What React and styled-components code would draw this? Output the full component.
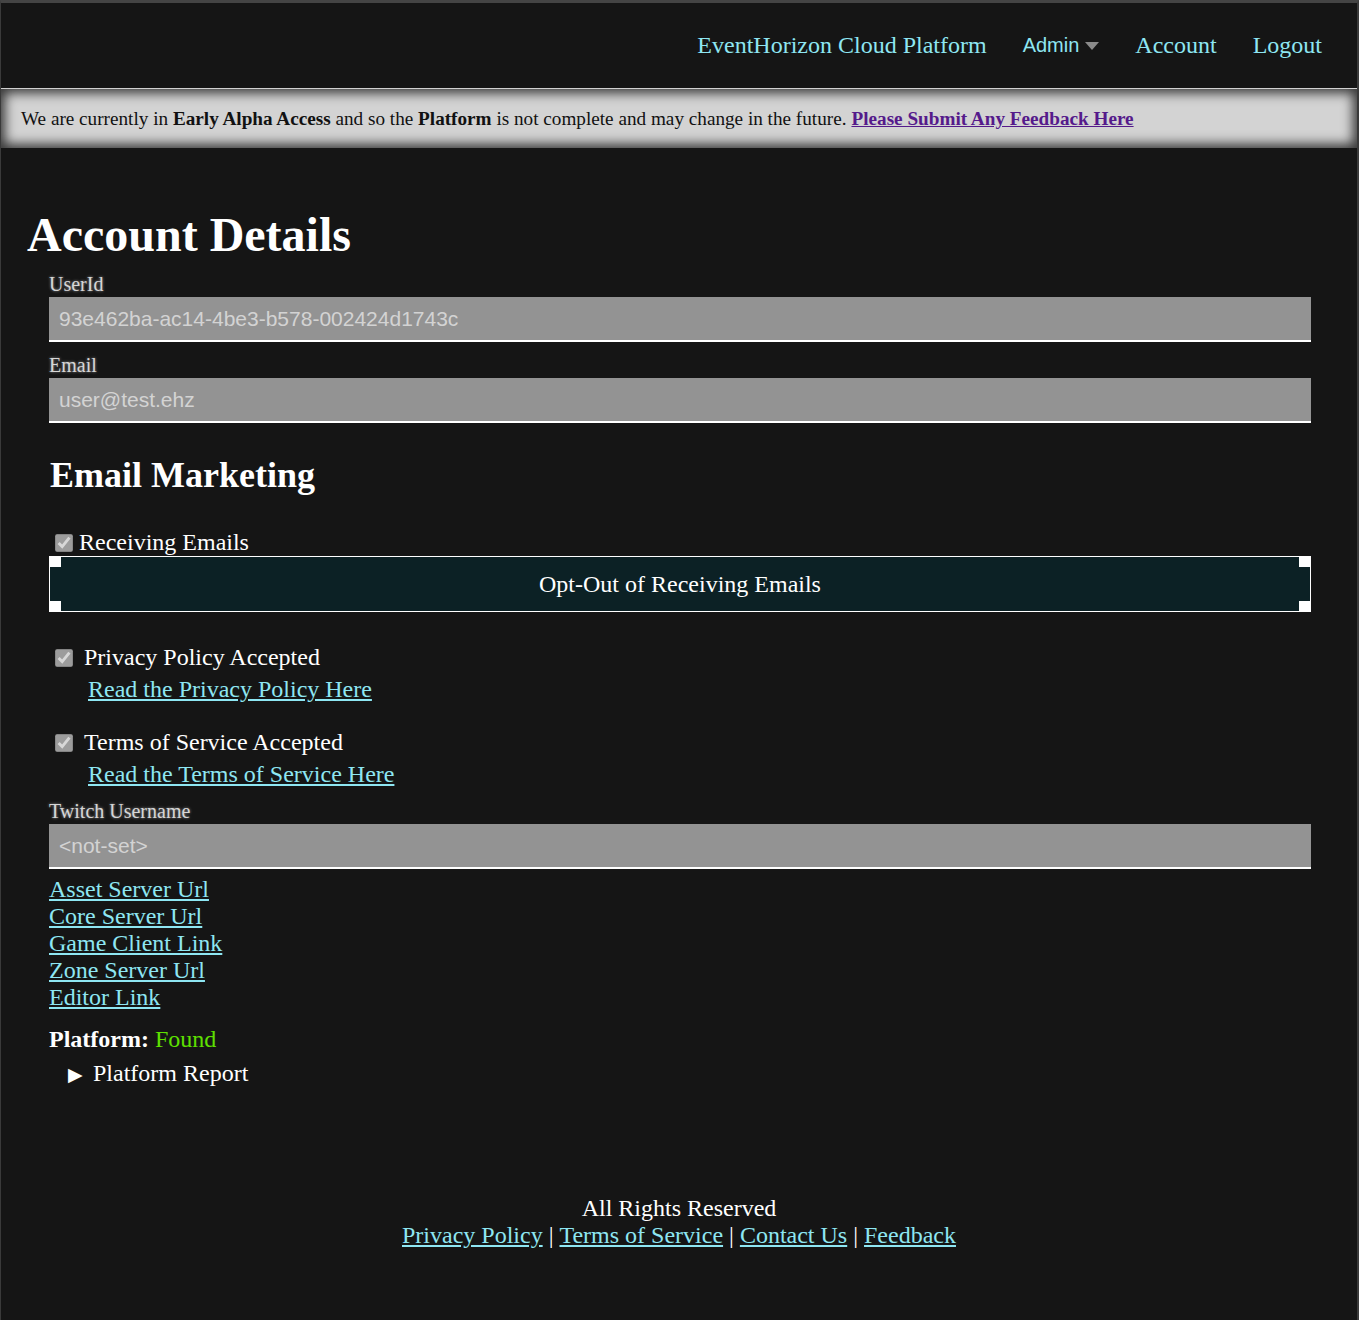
import styled, {createGlobalStyle} from "styled-components";

const GlobalStyle = createGlobalStyle`
    html, body {
        margin: 0;
        padding: 0;
        background: #151515;
    }
    body {
        font-family: "Liberation Serif", "Times New Roman", serif;
        font-size: 24px;
        color: #ffffff;
    }
`

const Page = styled.div`
    display: flex;
    flex-direction: column;
    min-height: 1317px;
    border-top: 3px solid #444444;
    border-left: 1px solid #3a3a3a;
    border-right: 2px solid #3a3a3a;
    background: #151515;
`

const Header = styled.header`
    display: flex;
    justify-content: flex-end;
    align-items: center;
    gap: 36px;
    height: 85px;
    padding-right: 35px;
    border-bottom: 1px solid #d0d0d0;
`

const NavLink = styled.a`
    color: #8ee6f2;
    text-decoration: none;
    font-size: 24px;
`

const AdminMenu = styled.span`
    display: flex;
    align-items: center;
    gap: 6px;
    color: #8ee6f2;
    font-family: "Liberation Sans", Arial, sans-serif;
    font-size: 20px;
`

const Caret = styled.span`
    width: 0;
    height: 0;
    border-left: 7px solid transparent;
    border-right: 7px solid transparent;
    border-top: 8px solid #8a8a8a;
    margin-top: 1px;
`

const Banner = styled.div`
    height: 59px;
    display: flex;
    align-items: center;
    padding-left: 20px;
    background: #d3d3d3;
    box-shadow: inset 0 0 12px 4px rgba(0, 0, 0, 0.75);
    color: #111111;
    font-size: 19.2px;

    b {
        font-weight: 700;
    }
`

const BannerLink = styled.a`
    margin-left: 5px;
    color: #551a8b;
    font-weight: 700;
    text-decoration: underline;
`

const Main = styled.main`
    flex: 1;
    padding: 60px 25px 0;
`

const Title = styled.h1`
    margin: 0 0 12px 1px;
    font-size: 48px;
    font-weight: 700;
    line-height: 53px;
`

const Section = styled.section`
    display: flex;
    flex-direction: column;
    margin: 0 21px 0 23px;
`

const Label = styled.label`
    display: block;
    font-size: 20px;
    line-height: 22px;
    color: #d6d6d6;
    text-shadow: 0 0 3px rgba(255, 255, 255, 0.55);
    margin-bottom: 2px;
`

const Field = styled.input`
    box-sizing: border-box;
    width: 100%;
    height: 45px;
    margin: 0 0 ${p => p.$gap || 12}px;
    padding: 0 10px;
    border: none;
    border-bottom: 2px solid #ffffff;
    background: #939393;
    color: #d3d3d3;
    font-family: "Liberation Sans", Arial, sans-serif;
    font-size: 21px;
    outline: none;
`

const SubTitle = styled.h2`
    margin: 20px 0 34px 1px;
    font-size: 36px;
    font-weight: 700;
    line-height: 40px;
`

const CheckRow = styled.div`
    display: flex;
    align-items: center;
    gap: ${p => p.$gap || 6}px;
    padding-left: 6px;
    line-height: 27px;
`

const Check = styled.input`
    width: 18px;
    height: 18px;
    margin: 0;
`

const OptOutButton = styled.button`
    position: relative;
    box-sizing: border-box;
    width: 100%;
    height: 56px;
    margin: 0 0 32px;
    border: 1px solid #ffffff;
    background: #0c2125;
    color: #ffffff;
    font-family: "Liberation Serif", "Times New Roman", serif;
    font-size: 24px;
    cursor: pointer;
`

const Corner = styled.span`
    position: absolute;
    width: 12px;
    height: 11px;
    background: #ffffff;
    ${p => p.$top ? "top: -1px;" : "bottom: -1px;"}
    ${p => p.$left ? "left: -1px;" : "right: -1px;"}
`

const PolicyBlock = styled.div`
    display: flex;
    flex-direction: column;
    margin-bottom: ${p => p.$gap || 0}px;
`

const IndentLink = styled.a`
    margin: 5px 0 0 39px;
    color: #8ee6f2;
    text-decoration: underline;
    line-height: 27px;
`

const LinkList = styled.div`
    display: flex;
    flex-direction: column;
    align-items: flex-start;
    line-height: 27px;
`

const Link = styled.a`
    color: #8ee6f2;
    text-decoration: underline;
`

const Status = styled.div`
    margin-top: 15px;
    line-height: 27px;

    b {
        font-weight: 700;
    }
`

const Found = styled.span`
    color: #5ee000;
`

const Report = styled.details`
    margin: 7px 0 0 19px;
    line-height: 27px;

    summary {
        cursor: pointer;
        list-style: none;
    }
    summary::before {
        content: "▶";
        display: inline-block;
        width: 25px;
        font-size: 19px;
    }
`

const Footer = styled.footer`
    display: flex;
    flex-direction: column;
    align-items: center;
    padding: 0 0 71px;
    line-height: 27px;
`

const FooterLinks = styled.div`
    display: flex;
    gap: 6px;
    color: #ffffff;
`

export default function App() {
    return (
        <Page>
            <GlobalStyle />
            <Header>
                <NavLink href="#">EventHorizon Cloud Platform</NavLink>
                <AdminMenu>Admin <Caret /></AdminMenu>
                <NavLink href="#">Account</NavLink>
                <NavLink href="#">Logout</NavLink>
            </Header>
            <Banner>
                <span>
                    We are currently in <b>Early Alpha Access</b> and so the <b>Platform</b> is not complete and may change in the future.
                </span>
                <BannerLink href="#">Please Submit Any Feedback Here</BannerLink>
            </Banner>
            <Main>
                <Title>Account Details</Title>
                <Section>
                    <Label>UserId</Label>
                    <Field readOnly value="93e462ba-ac14-4be3-b578-002424d1743c" />
                    <Label>Email</Label>
                    <Field readOnly value="user@test.ehz" />
                    <SubTitle>Email Marketing</SubTitle>
                    <CheckRow>
                        <Check type="checkbox" checked disabled readOnly />
                        Receiving Emails
                    </CheckRow>
                    <OptOutButton>
                        <Corner $top $left />
                        <Corner $left />
                        <Corner $top />
                        <Corner />
                        Opt-Out of Receiving Emails
                    </OptOutButton>
                    <PolicyBlock $gap={26}>
                        <CheckRow $gap={11}>
                            <Check type="checkbox" checked disabled readOnly />
                            Privacy Policy Accepted
                        </CheckRow>
                        <IndentLink href="#">Read the Privacy Policy Here</IndentLink>
                    </PolicyBlock>
                    <PolicyBlock $gap={12}>
                        <CheckRow $gap={11}>
                            <Check type="checkbox" checked disabled readOnly />
                            Terms of Service Accepted
                        </CheckRow>
                        <IndentLink href="#">Read the Terms of Service Here</IndentLink>
                    </PolicyBlock>
                    <Label>Twitch Username</Label>
                    <Field readOnly value="<not-set>" $gap={7} />
                    <LinkList>
                        <Link href="#">Asset Server Url</Link>
                        <Link href="#">Core Server Url</Link>
                        <Link href="#">Game Client Link</Link>
                        <Link href="#">Zone Server Url</Link>
                        <Link href="#">Editor Link</Link>
                    </LinkList>
                    <Status>
                        <b>Platform:</b> <Found>Found</Found>
                    </Status>
                    <Report>
                        <summary>Platform Report</summary>
                    </Report>
                </Section>
            </Main>
            <Footer>
                <div>All Rights Reserved</div>
                <FooterLinks>
                    <Link href="#">Privacy Policy</Link>|
                    <Link href="#">Terms of Service</Link>|
                    <Link href="#">Contact Us</Link>|
                    <Link href="#">Feedback</Link>
                </FooterLinks>
            </Footer>
        </Page>
    );
}
